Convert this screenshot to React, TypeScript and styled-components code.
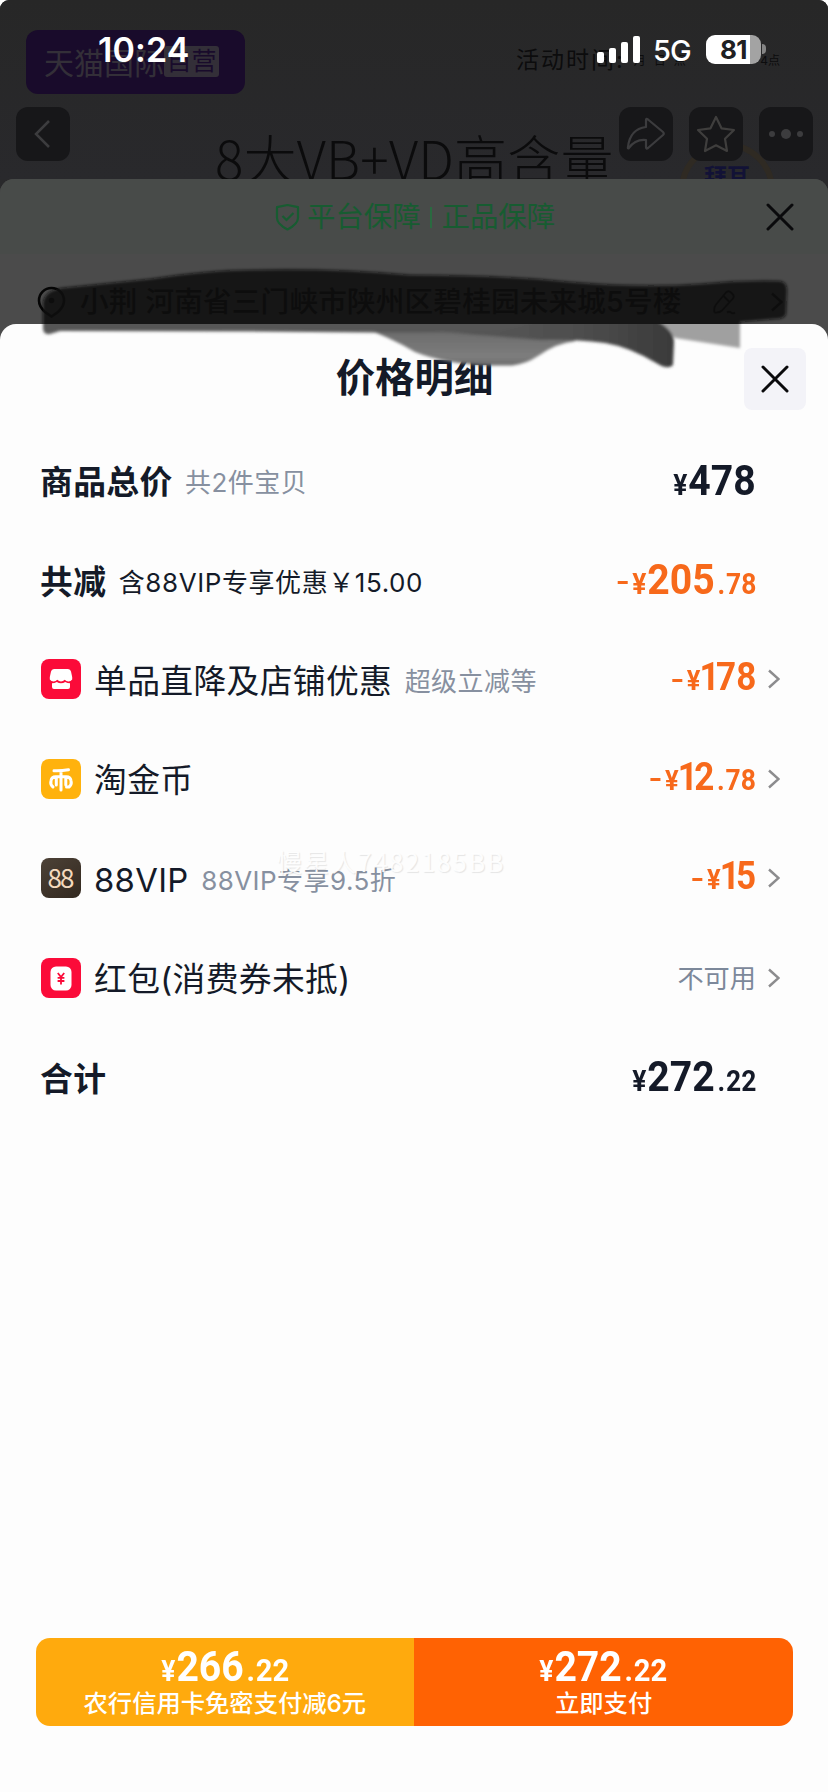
import React from "react";
import styled, { createGlobalStyle } from "styled-components";

const GlobalStyle = createGlobalStyle`
  * { box-sizing: border-box; }
  html, body { margin: 0; background: #fff; }
  body {
    font-family: Inter, "Noto Sans CJK SC", sans-serif;
    color: #141a28;
    -webkit-font-smoothing: antialiased;
  }
`;

const Screen = styled.main`
  position: relative;
  display: flex;
  flex-direction: column;
  width: 828px;
  height: 1792px;
  overflow: hidden;
  border-radius: 9px 9px 0 0;
  background: #29292b;
`;

/* status bar */
const StatusBar = styled.header`
  position: absolute;
  inset: 0 0 auto 0;
  z-index: 3;
  display: flex;
  align-items: center;
  height: 98px;
  padding: 0 62px 0 98px;
  color: #fff;
`;
const Clock = styled.time`
  flex: 1;
  margin-top: 1px;
  font-size: 34px;
  font-weight: 600;
  letter-spacing: 0.1px;
`;
const Signal = styled.div`
  display: flex;
  align-items: flex-end;
  gap: 5px;
  height: 27px;
`;
const SignalBar = styled.i<{ $h: number }>`
  width: 7px;
  height: ${(p) => p.$h}px;
  border-radius: 2px;
  background: #fff;
`;
const Network = styled.span`
  width: 38px;
  margin: 3px 15px 0 13px;
  font-size: 29px;
  font-weight: 500;
  letter-spacing: -1px;
`;
const Battery = styled.div`
  display: flex;
  align-items: center;
  gap: 1px;
`;
const BatteryBody = styled.div`
  width: 55px;
  height: 29px;
  border-radius: 9px;
  background: linear-gradient(90deg, #fff 0 80%, #a3a3a3 80%);
  color: #202022;
  font-size: 26px;
  line-height: 29px;
  font-weight: 700;
  text-align: center;
  letter-spacing: -0.5px;
`;
const BatteryTip = styled.i`
  width: 4px;
  height: 10px;
  border-radius: 0 5px 5px 0;
  background: #858585;
`;

/* dimmed product page */
const ProductPage = styled.section`
  position: relative;
  flex: none;
  display: flex;
  flex-direction: column;
  height: 179px;
  overflow: hidden;
  background: linear-gradient(#272727, #29292c);
`;
const PromoRow = styled.div`
  display: flex;
  align-items: center;
  height: 64px;
  margin: 30px 48px 0 26px;
`;
const StoreBadge = styled.div`
  display: flex;
  align-items: center;
  width: 219px;
  height: 64px;
  padding: 0 0 2px 18px;
  border-radius: 12px;
  background: #190b2b;
  color: #332f38;
  font-size: 30px;
  font-weight: 400;
  white-space: nowrap;
`;
const StoreTag = styled.span`
  width: 55px;
  height: 31px;
  border-radius: 3px;
  background: #332f38;
  color: #190b2b;
  font-size: 25px;
  line-height: 30px;
  text-align: center;
`;
const PromoTime = styled.div`
  margin: -8px 0 0 271px;
  color: #0c0c0d;
  font-size: 23px;
  letter-spacing: 2px;
  white-space: nowrap;
`;
const PromoHours = styled.div`
  flex: 1;
  display: flex;
  gap: 8px;
  margin: -6px 0 0 9px;
  color: #0c0c0d;
  font-size: 12px;
`;
const PromoEnd = styled.span`
  margin-left: auto;
`;
const NavRow = styled.div`
  display: flex;
  gap: 16px;
  height: 54px;
  margin: 13px 15px 0 16px;
`;
const NavButton = styled.div`
  position: relative;
  z-index: 1;
  display: grid;
  place-items: center;
  flex: none;
  width: 54px;
  height: 54px;
  border-radius: 12px;
  background: #171719;
`;
const ProductName = styled.div`
  flex: 1;
  min-width: 0;
  height: 72px;
  padding-left: 129px;
  color: #0b0b0c;
  font-family: "Noto Sans CJK SC", sans-serif;
  font-size: 53px;
  font-weight: 300;
  letter-spacing: 0.2px;
  line-height: 72px;
  margin-top: 14px;
  white-space: nowrap;
`;
const BrandSeal = styled.div`
  position: absolute;
  top: 142px;
  left: 679px;
  width: 96px;
  height: 96px;
  padding-top: 17px;
  border: 6px solid #2f2a23;
  border-radius: 50%;
  color: #121236;
  font-size: 23px;
  font-weight: 700;
  line-height: 24px;
  text-align: center;
`;

/* dimmed checkout sheet */
const CheckoutSheet = styled.section`
  flex: none;
  height: 179px;
  border-radius: 14px 14px 0 0;
  overflow: hidden;
  background: #4b4b4b;
`;
const GuaranteeBar = styled.div`
  display: flex;
  align-items: center;
  height: 75px;
  padding: 1px 34px 0 275px;
  background: #484b49;
  color: #175c31;
  font-size: 28.4px;
  line-height: 36px;
`;
const Divider = styled.i`
  flex: none;
  width: 2px;
  height: 21px;
  margin: 0 10px 0 9px;
  background: #2a6a40;
`;
const Spacer = styled.i`
  flex: 1;
`;
const AddressRow = styled.div`
  display: flex;
  align-items: center;
  height: 95px;
  padding: 0 45px 0 37px;
  color: #020202;
  font-size: 28.6px;
  font-weight: 500;
  line-height: 36px;
  white-space: nowrap;
`;
const AddressText = styled.span`
  flex: 1;
  margin-left: 14px;
  letter-spacing: 0.2px;
`;

/* price sheet */
const PriceSheet = styled.section`
  flex: 1;
  display: flex;
  flex-direction: column;
  margin-top: -34px;
  border-radius: 16px 16px 0 0;
  background: #fdfdfd;
`;
const SheetHeader = styled.div`
  display: grid;
  grid-template-columns: 62px 1fr 62px;
  align-items: center;
  height: 107px;
  padding: 2px 22px 0 23px;
`;
const SheetTitle = styled.h1`
  grid-column: 2;
  margin: 0;
  padding-bottom: 1px;
  font-size: 39.4px;
  line-height: 50px;
  font-weight: 700;
  text-align: center;
`;
const CloseButton = styled.button`
  display: grid;
  place-items: center;
  width: 62px;
  height: 62px;
  padding: 0;
  border: 0;
  border-radius: 8px;
  background: #f3f3f8;
`;
const Rows = styled.div`
  position: relative;
  flex: 1;
`;
const Row = styled.div`
  display: flex;
  align-items: center;
  height: 99.4px;
  padding: 0 48px 0 41px;
  white-space: nowrap;
`;
const RowIcon = styled.div`
  flex: none;
  width: 40px;
  height: 40px;
  margin-right: 13px;
`;
const Label = styled.span<{ $bold?: boolean }>`
  margin-left: ${(p) => (p.$bold ? -1 : 0)}px;
  padding-top: 3px;
  font-size: 32.8px;
  font-weight: ${(p) => (p.$bold ? 700 : 400)};
  line-height: 40px;
  letter-spacing: 0.33px;
`;
const Note = styled.span<{ $dark?: boolean }>`
  flex: 1;
  margin-left: 12.5px;
  padding-top: 5px;
  color: ${(p) => (p.$dark ? "#141a28" : "#8790a0")};
  font-size: 26px;
  line-height: 36px;
  letter-spacing: ${(p) => (p.$dark ? 0.58 : 0.45)}px;
`;
const Unavailable = styled.span`
  padding-top: 3px;
  color: #7c889a;
  font-size: 26.200px;
  line-height: 36px;
`;
const ChevronSlot = styled.span`
  display: flex;
  justify-content: flex-end;
  width: 24px;
`;

const Amount = styled.span<{ $tone: string; $size: number; $shift: number; $origin: string }>`
  display: flex;
  align-items: baseline;
  margin-top: ${(p) => p.$shift}px;
  color: ${(p) => p.$tone};
  font-family: Roboto, sans-serif;
  font-weight: 700;
  font-size: ${(p) => p.$size}px;
  line-height: 1;
  transform: scaleX(0.91);
  transform-origin: ${(p) => p.$origin} center;
`;
const Small = styled.span<{ $size: number }>`
  font-size: ${(p) => p.$size}px;
  line-height: 1;
`;
const Currency = styled(Small)`
  margin-right: 1px;
`;
const Point = styled(Small)`
  margin: 0 1px 0 3px;
`;
const SlimDigit = styled.span`
  margin: 0 -4px 0 -2px;
`;
const Dash = styled.i`
  align-self: center;
  width: 11px;
  height: 3px;
  margin: 6px 5px 0 0;
  background: currentColor;
`;
const Watermark = styled.div`
  position: absolute;
  top: 412px;
  left: 277px;
  color: rgba(255, 255, 255, 0.92);
  font-family: "Noto Sans CJK SC", sans-serif;
  font-size: 25px;
  line-height: 36px;
  letter-spacing: 1.95px;
  text-shadow: 1px 1px 1px rgba(120, 120, 120, 0.18);
  white-space: nowrap;
`;

/* payment bar */
const PayBar = styled.footer`
  display: flex;
  flex: none;
  height: 88px;
  margin: 0 35px 66px 35.500px;
  border-radius: 14px;
  overflow: hidden;
`;
const PayOption = styled.button<{ $fill: string }>`
  flex: 1;
  display: flex;
  flex-direction: column;
  align-items: center;
  padding: 7px 0 0;
  border: 0;
  background: ${(p) => p.$fill};
  color: #fff;
  font-family: inherit;
`;
const PayLabel = styled.span`
  margin-top: -2px;
  font-size: 24.3px;
  font-weight: 500;
  line-height: 34px;
  white-space: nowrap;
`;

const BrushMark = styled.svg`
  position: absolute;
  top: 250px;
  left: 0;
  z-index: 2;
  pointer-events: none;
`;

const Cross = ({ color = "#0a0a0c" }: { color?: string }) => (
  <svg width="28" height="28" viewBox="0 0 28 28" stroke={color} strokeWidth="3" strokeLinecap="round">
    <path d="M2 2 26 26M26 2 2 26" />
  </svg>
);

const Chevron = ({ color = "#8c8c8e", width = 2.4 }: { color?: string; width?: number }) => (
  <svg width="12" height="20" viewBox="0 0 12 20" fill="none" stroke={color} strokeWidth={width}>
    <path d="M1 1.5 10.5 10 1 18.5" />
  </svg>
);

const ShopIcon = () => (
  <svg width="40" height="40" viewBox="0 0 40 40">
    <rect width="40" height="40" rx="8" fill="#fb0b39" />
    <path
      fill="#fff"
      d="M13 10h14q2.500 0 3 2.500L31.200 18v2.500q-1.400 2-3.800 2-2.200 0-3.700-1.700-1.600 1.700-3.700 1.700t-3.700-1.700q-1.500 1.700-3.700 1.700-2.400 0-3.800-2V18L10 12.500Q10.500 10 13 10Z"
    />
    <path fill="#fff" d="M11 24.300q2.500 0 4.800-1.400 2 1.400 4.200 1.400t4.200-1.400q2.300 1.400 4.800 1.400V28q0 2-2 2H13q-2 0-2-2Z" />
  </svg>
);

const CoinIcon = () => (
  <svg width="40" height="40" viewBox="0 0 40 40" fill="none" stroke="#fff" strokeWidth="3" strokeLinecap="round">
    <rect width="40" height="40" rx="8" fill="#ffb20d" stroke="none" />
    <path d="M13 11.700Q20 12 27.500 10.700M20 12v19M12 28q-3-2.500-2-6.500.8-3.700 4.500-3.700h11q3.700 0 4.500 3.700 1 4-2 6.500h-2.500M15.300 18.500V26M24.800 18.500V26" />
  </svg>
);

const Vip = styled.div`
  height: 40px;
  border-radius: 8px;
  background: linear-gradient(145deg, #4d4237, #32281f);
  color: #f4d9bd;
  font-family: "Noto Sans CJK SC", sans-serif;
  font-size: 26px;
  line-height: 38px;
  letter-spacing: -2px;
  text-indent: -2px;
  text-align: center;
`;

const PacketIcon = () => (
  <svg width="40" height="40" viewBox="0 0 40 40">
    <rect width="40" height="40" rx="8" fill="#fb0b39" />
    <rect x="9.500" y="8.500" width="21" height="24" rx="5.500" fill="#fff" />
    <path d="M16.800 15l3.200 4 3.200-4M20 18.500V26.500M16.600 19.800h6.800M16.600 23h6.800" stroke="#fb0b39" strokeWidth="1.800" fill="none" />
  </svg>
);

const ORANGE = "#f7691b";
const INK = "#141a28";

interface PriceProps {
  whole: string;
  cents?: string;
  tone?: string;
  negative?: boolean;
  size?: number;
  centsSize?: number;
  shift?: number;
  origin?: string;
}
const Price = ({
  whole,
  cents,
  tone = INK,
  negative,
  size = 43,
  centsSize = 29,
  shift = -1,
  origin = "right",
}: PriceProps) => (
  <Amount $tone={tone} $size={size} $shift={shift} $origin={origin}>
    {negative && <Dash />}
    <Currency $size={size > 40 ? 29 : 28}>¥</Currency>
    {[...whole].map((digit, i) => (digit === "1" ? <SlimDigit key={i}>1</SlimDigit> : <span key={i}>{digit}</span>))}
    {cents && (
      <>
        <Point $size={centsSize}>.</Point>
        <Small $size={centsSize}>{cents}</Small>
      </>
    )}
  </Amount>
);

const discounts = [
  { icon: <ShopIcon />, label: "单品直降及店铺优惠", note: "超级立减等", whole: "178" },
  { icon: <CoinIcon />, label: "淘金币", whole: "12", cents: "78" },
  { icon: <Vip>88</Vip>, label: "88VIP", note: "88VIP专享9.5折", whole: "15" },
  { icon: <PacketIcon />, label: "红包(消费券未抵)" },
];

export default function App() {
  return (
    <>
      <GlobalStyle />
      <Screen>
        <StatusBar>
          <Clock>10:24</Clock>
          <Signal>
            {[11, 15, 21, 27].map((h) => (
              <SignalBar key={h} $h={h} />
            ))}
          </Signal>
          <Network>5G</Network>
          <Battery>
            <BatteryBody>81</BatteryBody>
            <BatteryTip />
          </Battery>
        </StatusBar>

        <ProductPage>
          <PromoRow>
            <StoreBadge>
              天猫国际
              <StoreTag>自营</StoreTag>
            </StoreBadge>
            <PromoTime>活动时间:</PromoTime>
            <PromoHours>
              <span>月</span>
              <span>日</span>
              <span>点</span>
              <PromoEnd>4点</PromoEnd>
            </PromoHours>
          </PromoRow>
          <BrandSeal>拜耳</BrandSeal>
          <NavRow>
            <NavButton>
              <svg width="20" height="30" viewBox="0 0 20 30" fill="none" stroke="#3c3c3e" strokeWidth="2.500">
                <path d="M16 2 3 15l13 13" />
              </svg>
            </NavButton>
            <ProductName>8大VB+VD高含量</ProductName>
            <NavButton>
              <svg width="40" height="34" viewBox="0 0 40 34" fill="none" stroke="#3c3c3e" strokeWidth="2.200" strokeLinejoin="round">
                <path d="M20 3q0-2 2-.5L37 15q1.500 1.500 0 3L22 31q-2 1.500-2-1v-7Q9 22 3 31q-1.500 1-1-1Q4 12 20 10Z" />
              </svg>
            </NavButton>
            <NavButton>
              <svg width="40" height="38" viewBox="0 0 40 38" fill="none" stroke="#3f3e3d" strokeWidth="2.200" strokeLinejoin="round">
                <path d="M20 2l5.500 11.300L38 15l-9 8.800L31 36l-11-5.700L9 36l2-12.200L2 15l12.500-1.700Z" />
              </svg>
            </NavButton>
            <NavButton>
              <svg width="36" height="12" viewBox="0 0 36 12" fill="#3c3c3e">
                <circle cx="4" cy="6" r="3" />
                <circle cx="18" cy="6" r="5" />
                <circle cx="32" cy="6" r="3" />
              </svg>
            </NavButton>
          </NavRow>
        </ProductPage>

        <CheckoutSheet>
          <GuaranteeBar>
            <svg width="25" height="28" viewBox="0 0 25 28" fill="none" stroke="#175c31" strokeWidth="2.200" style={{ marginRight: 7 }}>
              <path d="M12.500 2 2 4.200V15q0 6 10.500 11.500Q23 21 23 15V4.200Z" strokeLinejoin="round" />
              <path d="M7.500 13l4 4 7-7" />
            </svg>
            平台保障
            <Divider />
            正品保障
            <Spacer />
            <Cross />
          </GuaranteeBar>
          <AddressRow>
            <svg width="29" height="32" viewBox="0 0 29 32" fill="none" stroke="#050505" strokeWidth="2.600">
              <path d="M8 26Q2 20.500 2 14.500a12.500 12.500 0 0 1 25 0Q27 20.500 21 26l-6.500 4.500Z" />
              <circle cx="14.500" cy="14.500" r="2.800" fill="#050505" stroke="none" />
            </svg>
            <AddressText>小荆 河南省三门峡市陕州区碧桂园未来城5号楼</AddressText>
            <svg width="24" height="26" viewBox="0 0 24 26" fill="none" stroke="#050505" strokeWidth="1.800" style={{ marginRight: 35 }}>
              <path d="M2.500 23.500q-1-5 1.500-8L14 3.500q2.500-2.500 5 0l1.500 1.500q2.500 2.500 0 5L10 21.500q-2.500 2.500-7.500 2M11.500 7l6 6M15 23.500q2-1.500 4 0t4 0" />
            </svg>
            <Chevron color="#050505" />
          </AddressRow>
        </CheckoutSheet>

        <PriceSheet>
          <SheetHeader>
            <SheetTitle>价格明细</SheetTitle>
            <CloseButton aria-label="关闭">
              <Cross />
            </CloseButton>
          </SheetHeader>
          <Rows>
            <Row>
              <Label $bold>商品总价</Label>
              <Note>共2件宝贝</Note>
              <Price whole="478" />
              <ChevronSlot />
            </Row>
            <Row>
              <Label $bold>共减</Label>
              <Note $dark>含88VIP专享优惠￥15.00</Note>
              <Price whole="205" cents="78" tone={ORANGE} negative />
              <ChevronSlot />
            </Row>
            {discounts.map((d) => (
              <Row key={d.label}>
                <RowIcon>{d.icon}</RowIcon>
                <Label>{d.label}</Label>
                <Note>{d.note}</Note>
                {d.whole ? (
                  <Price whole={d.whole} cents={d.cents} tone={ORANGE} negative size={38.5} shift={-4} />
                ) : (
                  <Unavailable>不可用</Unavailable>
                )}
                <ChevronSlot>
                  <Chevron />
                </ChevronSlot>
              </Row>
            ))}
            <Row>
              <Label $bold>合计</Label>
              <Spacer />
              <Price whole="272" cents="22" />
              <ChevronSlot />
            </Row>
            <Watermark>慢星人7482185BB</Watermark>
          </Rows>
          <PayBar>
            <PayOption $fill="#ffaa0d">
              <Price whole="266" cents="22" tone="#fff" centsSize={32} shift={0} origin="center" />
              <PayLabel>农行信用卡免密支付减6元</PayLabel>
            </PayOption>
            <PayOption $fill="#ff6203">
              <Price whole="272" cents="22" tone="#fff" centsSize={32} shift={0} origin="center" />
              <PayLabel>立即支付</PayLabel>
            </PayOption>
          </PayBar>
        </PriceSheet>

        <BrushMark width="828" height="130" viewBox="0 250 828 130">
          <defs>
            <filter id="soft" x="-5%" y="-20%" width="110%" height="140%">
              <feGaussianBlur stdDeviation="1.500" />
            </filter>
            <clipPath id="upper">
              <rect x="0" y="250" width="828" height="74" />
            </clipPath>
            <clipPath id="lower">
              <rect x="0" y="324" width="828" height="56" />
            </clipPath>
            <linearGradient id="wash" x1="0" x2="0" y1="0" y2="1">
              <stop offset="0" stopColor="#666" />
              <stop offset="0.800" stopColor="#7d7d7d" />
              <stop offset="1" stopColor="#6a6a6a" />
            </linearGradient>
            <linearGradient id="tail" x1="0" x2="1" y1="0" y2="0">
              <stop offset="0" stopColor="#585858" />
              <stop offset="0.600" stopColor="#4e4e4e" />
              <stop offset="1" stopColor="#3a3a3a" />
            </linearGradient>
          </defs>
          <g clipPath="url(#upper)">
            <path
              filter="url(#soft)"
              fill="#0f0f0f"
              fillOpacity="0.88"
              d="M43 302Q46 290 62 288L150 279Q210 270 250 270 330 268 410 275 500 275 570 282 640 288 700 284 740 280 780 281 787 282 787 290L786 314Q785 319 775 319L740 322V340H43Z"
            />
          </g>
          <g clipPath="url(#lower)">
            <g filter="url(#soft)">
              <path fill="#a0a0a0" d="M650 316H740V348L675 338Z" />
              <path fill="url(#wash)" d="M362 328Q388 336 415 352 445 364 490 365.500H512Q526 364 538 356 556 343 576 341L540 324H362Z" />
              <path fill="url(#tail)" d="M430 316H648Q674 328 674 342L673 365Q668 370 658 364 630 347 605 343 570 339 540 340 490 336 430 331Z" />
              <path fill="#565656" d="M43 316H560L500 331Q420 333 370 332.500 220 331 60 331L50 334Q43 335 43 328Z" />
            </g>
          </g>
        </BrushMark>
      </Screen>
    </>
  );
}
